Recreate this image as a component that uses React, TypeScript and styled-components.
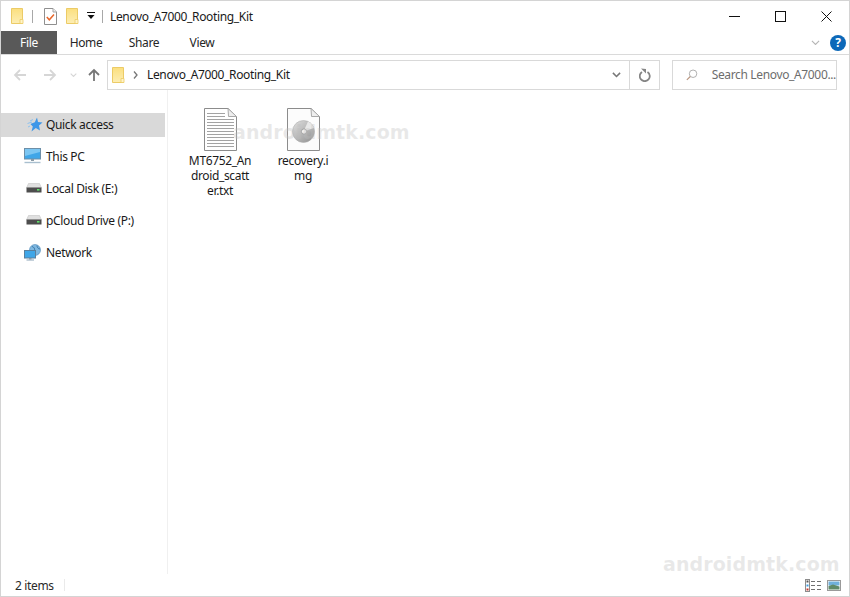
import { createGlobalStyle, styled } from "styled-components";

const GlobalStyle = createGlobalStyle`
  html, body {
    margin: 0;
    padding: 0;
    background: #fff;
  }
  * {
    box-sizing: border-box;
  }
`;

const Window = styled.div`
  position: relative;
  width: 850px;
  height: 597px;
  display: flex;
  flex-direction: column;
  background: #fff;
  border: 1px solid #d4d4d4;
  font-family: "Noto Sans", "Open Sans", sans-serif;
  font-size: 12px;
  letter-spacing: -0.35px;
  color: #1a1a1a;
  overflow: hidden;
`;

const TitleBar = styled.div`
  height: 30px;
  flex: none;
  display: flex;
  align-items: center;
  padding-left: 10px;
`;

const QuickTools = styled.div`
  display: flex;
  align-items: center;
`;

const ToolGap = styled.span<{ $w: number }>`
  width: ${(p) => p.$w}px;
`;

const TitleDivider = styled.span`
  width: 1px;
  height: 13px;
  background: #a8a8a8;
`;

const TitleText = styled.span`
  margin-left: 7px;
  color: #1a1a1a;
`;

const WindowButtons = styled.div`
  margin-left: auto;
  display: flex;
  align-items: center;
  height: 100%;
`;

const WindowButton = styled.div`
  width: 46px;
  height: 100%;
  display: flex;
  align-items: center;
  justify-content: center;
`;

const Ribbon = styled.div`
  height: 24px;
  flex: none;
  display: flex;
  align-items: stretch;
  border-bottom: 1px solid #dadada;
`;

const FileTab = styled.div`
  width: 56px;
  display: flex;
  align-items: center;
  justify-content: center;
  background: #595959;
  color: #fff;
  padding-bottom: 1px;
`;

const RibbonTab = styled.div`
  width: 58px;
  display: flex;
  align-items: center;
  justify-content: center;
  color: #262626;
  padding-bottom: 1px;
`;

const RibbonEnd = styled.div`
  margin-left: auto;
  display: flex;
  align-items: center;
  gap: 10px;
  padding-right: 3px;
`;

const HelpBadge = styled.div`
  width: 16px;
  height: 16px;
  border-radius: 50%;
  background: #0c68b8;
  color: #fff;
  font-weight: 700;
  font-size: 12px;
  line-height: 16px;
  text-align: center;
`;

const AddressRow = styled.div`
  height: 30px;
  margin-top: 5px;
  flex: none;
  display: flex;
  align-items: stretch;
  padding-right: 12px;
`;

const NavButtons = styled.div`
  width: 106px;
  flex: none;
  display: flex;
  align-items: center;
  padding-left: 12px;
`;

const NavButton = styled.div<{ $w: number }>`
  width: ${(p) => p.$w}px;
  display: flex;
  align-items: center;
`;

const AddressBox = styled.div`
  width: 553px;
  flex: none;
  display: flex;
  align-items: center;
  border: 1px solid #d9d9d9;
  padding-left: 4px;
`;

const Crumb = styled.span`
  margin-left: 9px;
  padding-bottom: 1px;
`;

const CrumbArrow = styled.span`
  margin-left: 8px;
  display: flex;
`;

const AddressEnd = styled.div`
  margin-left: auto;
  display: flex;
  align-items: stretch;
  height: 100%;
`;

const DropButton = styled.div`
  width: 30px;
  display: flex;
  align-items: center;
  justify-content: center;
  padding-left: 5px;
`;

const RefreshButton = styled.div`
  width: 30px;
  display: flex;
  align-items: center;
  justify-content: center;
  border-left: 1px solid #d9d9d9;
`;

const SearchBox = styled.div`
  margin-left: 12px;
  flex: 1;
  display: flex;
  align-items: center;
  border: 1px solid #d9d9d9;
  padding-left: 13px;
  color: #6d6d6d;
  white-space: nowrap;
  overflow: hidden;
`;

const SearchText = styled.span`
  margin-left: 14px;
  padding-bottom: 1px;
`;

const Body = styled.div`
  flex: 1;
  display: flex;
  min-height: 0;
`;

const Sidebar = styled.div`
  width: 167px;
  flex: none;
  padding-top: 23px;
  padding-right: 2px;
  border-right: 1px solid #f0f0f0;
`;

const NavItem = styled.div<{ $active?: boolean; $indent?: number }>`
  height: 24px;
  margin-bottom: 8px;
  display: flex;
  align-items: center;
  background: ${(p) => (p.$active ? "#d9d9d9" : "transparent")};
  padding-left: ${(p) => p.$indent ?? 23}px;
  padding-bottom: 2px;
  color: #1a1a1a;
`;

const NavIcon = styled.span<{ $w?: number }>`
  width: ${(p) => p.$w ?? 22}px;
  flex: none;
  display: flex;
  align-items: center;
`;

const Files = styled.div`
  flex: 1;
  display: flex;
  align-items: flex-start;
  padding: 18px 0 0 14px;
  gap: 7px;
`;

const FileItem = styled.div`
  width: 76px;
  display: flex;
  flex-direction: column;
  align-items: center;
`;

const FileName = styled.div`
  margin-top: 2px;
  text-align: center;
  line-height: 15px;
  white-space: nowrap;
  color: #1a1a1a;
`;

const StatusBar = styled.div`
  height: 22px;
  flex: none;
  display: flex;
  align-items: center;
  padding-left: 14px;
  padding-right: 8px;
  color: #2a2a2a;
`;

const StatusDivider = styled.span`
  width: 1px;
  height: 12px;
  background: #eaeaea;
  margin-left: 10px;
`;

const ViewToggles = styled.div`
  margin-left: auto;
  display: flex;
  align-items: center;
  gap: 6px;
`;

const Watermark = styled.div<{ $x: number; $y: number }>`
  position: absolute;
  left: ${(p) => p.$x}px;
  top: ${(p) => p.$y}px;
  font-family: "DejaVu Sans", "Noto Sans", sans-serif;
  font-size: 19px;
  font-weight: 700;
  letter-spacing: 0.1px;
  line-height: 1;
  color: rgba(190, 190, 190, 0.34);
  pointer-events: none;
`;

const Folder = ({ id }: { id: string }) => (
  <svg width="13" height="16" viewBox="0 0 13 16">
    <defs>
      <linearGradient id={id} x1="0" y1="0" x2="0" y2="1">
        <stop offset="0" stopColor="#fbdf7f" />
        <stop offset="1" stopColor="#fdeeb4" />
      </linearGradient>
    </defs>
    <path d="M0.5 0.5H11.5V15.5H0.5Z" fill={`url(#${id})`} stroke="#eccb66" />
    <path d="M9 11.5H12V15.5H9Z" fill="#fff4c8" stroke="#eccb66" strokeWidth="0.8" />
  </svg>
);

const CheckDoc = () => (
  <svg width="13" height="17" viewBox="0 0 13 17">
    <path d="M0.5 0.5H9L12.5 4V16.5H0.5Z" fill="#fff" stroke="#8f8f8f" />
    <path d="M9 0.5V4H12.5" fill="#eee" stroke="#a5a5a5" />
    <path d="M2.8 9L5.3 11.8L10 6.5" fill="none" stroke="#e8672c" strokeWidth="1.5" />
  </svg>
);

const Arrow = ({ dir, color }: { dir: "left" | "right" | "up"; color: string }) => {
  const paths = {
    left: "M13 7H2M7 2L2 7L7 12",
    right: "M1 7H12M7 2L12 7L7 12",
    up: "M7 13V2M2 7L7 2L12 7",
  };
  return (
    <svg width="14" height="14" viewBox="0 0 14 14">
      <path d={paths[dir]} fill="none" stroke={color} strokeWidth="1.8" />
    </svg>
  );
};

const Chevron = ({ color, w = 8, sw = 1.5 }: { color: string; w?: number; sw?: number }) => (
  <svg width={w} height={w * 0.6} viewBox="0 0 10 6">
    <path d="M1 1L5 5L9 1" fill="none" stroke={color} strokeWidth={sw} />
  </svg>
);

const TextDoc = () => (
  <svg width="33" height="43" viewBox="0 0 33 43">
    <path d="M0.5 0.5H24L32.5 8.5V42.5H0.5Z" fill="#fff" stroke="#8c8c8c" />
    <path d="M24 0.5L24.5 8.5H32.5Z" fill="#eeeeee" stroke="#a8a8a8" />
    {Array.from({ length: 12 }).map((_, i) => (
      <path key={i} d={`M3 ${5.5 + i * 3}H${i < 2 ? 21 : 30}`} stroke="#a3a3a3" strokeWidth="1" />
    ))}
  </svg>
);

const DiscDoc = () => (
  <svg width="33" height="43" viewBox="0 0 33 43">
    <defs>
      <linearGradient id="disc" x1="0" y1="0" x2="1" y2="1">
        <stop offset="0" stopColor="#e0e0e0" />
        <stop offset="0.5" stopColor="#b8b8b8" />
        <stop offset="1" stopColor="#8f8f8f" />
      </linearGradient>
    </defs>
    <path d="M0.5 0.5H24L32.5 8.5V42.5H0.5Z" fill="#fcfcfc" stroke="#8c8c8c" />
    <path d="M24 0.5L24.5 8.5H32.5Z" fill="#eeeeee" stroke="#a8a8a8" />
    <circle cx="16.5" cy="23.5" r="11" fill="url(#disc)" stroke="#a8a8a8" strokeWidth="0.5" />
    <path d="M16.5 23.5L21 13.5A11 11 0 0 1 27 20Z" fill="#e8e8e8" />
    <circle cx="17" cy="23.5" r="2.6" fill="#f2f2f2" stroke="#8f8f8f" strokeWidth="0.7" />
  </svg>
);

const Star = () => (
  <svg width="16" height="15" viewBox="0 0 16 15">
    <path d="M10 0.5L11 5L15.5 5.4L12 8.4L13 13.5L8.8 11L4.5 14.5L5.8 9.5L3.4 7L7.8 5.2Z" fill="#3d97e8" />
    <path d="M6 2.5L3 4M5 5L0.5 6.5M3 9L1 10" stroke="#8cc2f0" strokeWidth="1" />
  </svg>
);

const Monitor = () => (
  <svg width="17" height="16" viewBox="0 0 17 16">
    <rect x="0.5" y="0.5" width="16" height="10.5" fill="#3fa6e8" stroke="#6d8fa8" />
    <path d="M1 1H16V4L1 8Z" fill="#7cc6f2" />
    <path d="M7 11H10V13H7Z" fill="#8a9aa6" />
    <path d="M0.5 14.5H16.5" stroke="#a9bfcf" strokeWidth="1.4" />
  </svg>
);

const Drive = () => (
  <svg width="16" height="10" viewBox="0 0 16 10">
    <path d="M2.5 0.5H13.5L15.5 5H0.5Z" fill="#e0e0e0" stroke="#c4c4c4" strokeWidth="0.6" />
    <rect x="0.5" y="4.5" width="15" height="5" fill="#4d4d4d" />
    <rect x="11" y="6" width="2.5" height="1.6" fill="#5fe06a" />
  </svg>
);

const Globe = () => (
  <svg width="17" height="17" viewBox="0 0 17 17">
    <circle cx="11" cy="6" r="5.5" fill="#7fb8e0" stroke="#4b88b8" strokeWidth="0.6" />
    <path d="M8 2.5C10 3 11 4.5 10.5 6.5M13 1.5C13 3 14 5 16 5" fill="none" stroke="#2e6c9e" strokeWidth="0.8" />
    <rect x="0.5" y="6.5" width="11" height="7.5" fill="#3fa6e8" stroke="#5a7f9c" />
    <path d="M5 14H7.5V15.5H5Z" fill="#8a9aa6" />
    <path d="M2.5 16H10" stroke="#8ba4b8" />
  </svg>
);

const SearchIcon = () => (
  <svg width="14" height="14" viewBox="0 0 14 14">
    <circle cx="8.5" cy="5.5" r="4.5" fill="none" stroke="#9f9f9f" />
    <path d="M5.2 8.8L1 13" stroke="#b9957f" strokeWidth="1.3" />
  </svg>
);

const Refresh = () => (
  <svg width="12" height="14" viewBox="0 0 12 14">
    <path d="M3 4A5 5 0 1 0 8.5 4" fill="none" stroke="#858585" strokeWidth="1.8" />
    <path d="M2 0.5L7 1V5.5Z" fill="#858585" />
  </svg>
);

const DetailsView = () => (
  <svg width="16" height="13" viewBox="0 0 16 13">
    <rect x="0.5" y="0.5" width="4" height="12" fill="#fff" stroke="#8c8c8c" />
    <rect x="1.5" y="1.5" width="2" height="2" fill="#555" />
    <rect x="1.5" y="5.5" width="2" height="2" fill="#3f9be0" />
    <rect x="1.5" y="9.5" width="2" height="2" fill="#c8372d" />
    <path d="M6 2.5H10M12 2.5H16M6 6.5H10M12 6.5H16M6 10.5H10M12 10.5H16" stroke="#707070" />
  </svg>
);

const LargeView = () => (
  <svg width="14" height="11" viewBox="0 0 14 11">
    <rect x="0.5" y="0.5" width="13" height="10" fill="#fff" stroke="#9a9a9a" />
    <rect x="1.5" y="1.5" width="11" height="4" fill="#6fb0dc" />
    <path d="M1.5 6L6 4.5L12.5 6.5V9.5H1.5Z" fill="#5f8a6a" />
  </svg>
);

export default function App() {
  return (
    <>
      <GlobalStyle />
      <Window>
        <TitleBar>
          <QuickTools>
            <Folder id="folder-a" />
            <ToolGap $w={8} />
            <TitleDivider />
            <ToolGap $w={11} />
            <CheckDoc />
            <ToolGap $w={9} />
            <Folder id="folder-b" />
            <ToolGap $w={8} />
            <svg width="8" height="8" viewBox="0 0 8 8">
              <path d="M0 0.5H8" stroke="#111" />
              <path d="M0.5 3H7.5L4 7Z" fill="#111" />
            </svg>
            <ToolGap $w={7} />
            <TitleDivider />
          </QuickTools>
          <TitleText>Lenovo_A7000_Rooting_Kit</TitleText>
          <WindowButtons>
            <WindowButton>
              <svg width="11" height="11" viewBox="0 0 11 11">
                <path d="M0 5.5H11" stroke="#111" />
              </svg>
            </WindowButton>
            <WindowButton>
              <svg width="11" height="11" viewBox="0 0 11 11">
                <rect x="0.5" y="0.5" width="10" height="10" fill="none" stroke="#111" />
              </svg>
            </WindowButton>
            <WindowButton>
              <svg width="11" height="11" viewBox="0 0 11 11">
                <path d="M0.5 0.5L10.5 10.5M10.5 0.5L0.5 10.5" stroke="#111" />
              </svg>
            </WindowButton>
          </WindowButtons>
        </TitleBar>
        <Ribbon>
          <FileTab>File</FileTab>
          <RibbonTab>Home</RibbonTab>
          <RibbonTab>Share</RibbonTab>
          <RibbonTab>View</RibbonTab>
          <RibbonEnd>
            <Chevron color="#b5b5b5" w={9} sw={1.2} />
            <HelpBadge>?</HelpBadge>
          </RibbonEnd>
        </Ribbon>
        <AddressRow>
          <NavButtons>
            <NavButton $w={30}>
              <Arrow dir="left" color="#d6d6d6" />
            </NavButton>
            <NavButton $w={27}>
              <Arrow dir="right" color="#d6d6d6" />
            </NavButton>
            <NavButton $w={17}>
              <Chevron color="#d6d6d6" w={7} />
            </NavButton>
            <NavButton $w={14}>
              <Arrow dir="up" color="#777" />
            </NavButton>
          </NavButtons>
          <AddressBox>
            <Folder id="folder-c" />
            <CrumbArrow>
              <svg width="5" height="8" viewBox="0 0 5 8">
                <path d="M1 0.5L4 4L1 7.5" fill="none" stroke="#777" strokeWidth="1.3" />
              </svg>
            </CrumbArrow>
            <Crumb>Lenovo_A7000_Rooting_Kit</Crumb>
            <AddressEnd>
              <DropButton>
                <Chevron color="#777" w={9} sw={1.7} />
              </DropButton>
              <RefreshButton>
                <Refresh />
              </RefreshButton>
            </AddressEnd>
          </AddressBox>
          <SearchBox>
            <SearchIcon />
            <SearchText>Search Lenovo_A7000...</SearchText>
          </SearchBox>
        </AddressRow>
        <Body>
          <Sidebar>
            <NavItem $active $indent={26}>
              <NavIcon $w={19}>
                <Star />
              </NavIcon>
              Quick access
            </NavItem>
            <NavItem>
              <NavIcon>
                <Monitor />
              </NavIcon>
              This PC
            </NavItem>
            <NavItem $indent={25}>
              <NavIcon $w={20}>
                <Drive />
              </NavIcon>
              Local Disk (E:)
            </NavItem>
            <NavItem $indent={25}>
              <NavIcon $w={20}>
                <Drive />
              </NavIcon>
              pCloud Drive (P:)
            </NavItem>
            <NavItem>
              <NavIcon>
                <Globe />
              </NavIcon>
              Network
            </NavItem>
          </Sidebar>
          <Files>
            <FileItem>
              <TextDoc />
              <FileName>
                MT6752_An
                <br />
                droid_scatt
                <br />
                er.txt
              </FileName>
            </FileItem>
            <FileItem>
              <DiscDoc />
              <FileName>
                recovery.i
                <br />
                mg
              </FileName>
            </FileItem>
          </Files>
        </Body>
        <StatusBar>
          2 items
          <StatusDivider />
          <ViewToggles>
            <DetailsView />
            <LargeView />
          </ViewToggles>
        </StatusBar>
        <Watermark $x={232} $y={122}>
          androidmtk.com
        </Watermark>
        <Watermark $x={662} $y={554}>
          androidmtk.com
        </Watermark>
      </Window>
    </>
  );
}
